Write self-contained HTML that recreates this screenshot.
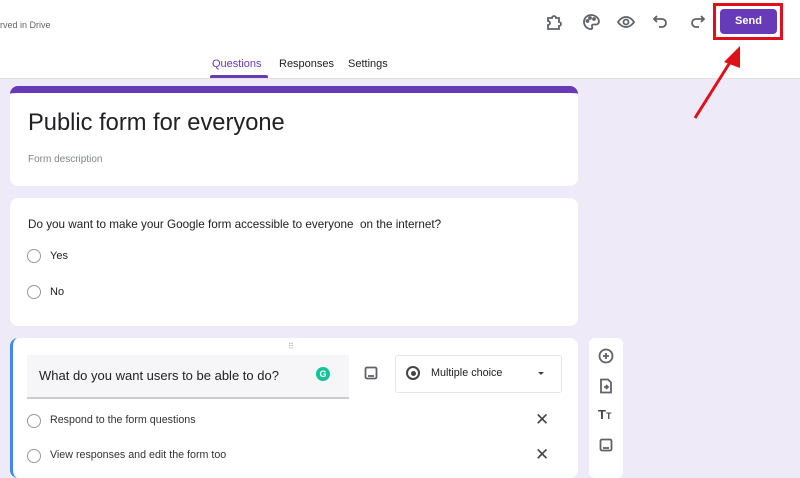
<!DOCTYPE html><html><head><style>
body{margin:0;width:800px;height:470px;overflow:hidden;background:#efeaf7;font-family:"Liberation Sans",sans-serif;position:relative;color:#202124}
.a{position:absolute}
.card{position:absolute;background:#fff;border-radius:8px;left:10px;width:568px}
.rad{position:absolute;width:12px;height:12px;border:1.5px solid #999;border-radius:50%}
.ic{position:absolute;stroke:#5f6368;fill:none;stroke-width:1.8}
</style></head><body>
<div class="a" style="left:0;top:0;width:800px;height:78px;background:#fff;border-bottom:1px solid #e0e0e0"></div>
<div class="a" style="left:0;top:20px;font-size:9px;color:#5f6368">rved in Drive</div>
<svg class="ic" style="left:544px;top:12px" width="20" height="20" viewBox="0 0 20 20"><path d="M4 6h4a2 2 0 1 1 4 0h3v4a2 2 0 1 1 0 4v3H4v-4a2 2 0 1 0 0-4z"/></svg>
<svg class="ic" style="left:581px;top:12px" width="20" height="20" viewBox="0 0 20 20"><path d="M10 3a7 7 0 0 0 0 14c1.5 0 1.5-1.5 1-2.5s0-2 1.5-2H15a3 3 0 0 0 3-3C18 6 14 3 10 3z"/><circle cx="6.5" cy="9" r="1"/><circle cx="9" cy="6" r="1"/><circle cx="13" cy="7" r="1"/></svg>
<svg class="ic" style="left:616px;top:12px" width="20" height="20" viewBox="0 0 20 20"><path d="M2 10s3-5 8-5 8 5 8 5-3 5-8 5-8-5-8-5z"/><circle cx="10" cy="10" r="2.5"/></svg>
<svg class="ic" style="left:652px;top:12px" width="18" height="18" viewBox="0 0 18 18"><path d="M5 4L2 7l3 3M2 7h8a4 4 0 0 1 0 8H7"/></svg>
<svg class="ic" style="left:688px;top:12px" width="18" height="18" viewBox="0 0 18 18"><path d="M13 4l3 3-3 3M16 7H8a4 4 0 0 0 0 8h3"/></svg>
<div class="a" style="left:713px;top:3px;width:70px;height:37px;border:3px solid #e0101a;box-sizing:border-box"></div>
<div class="a" style="left:720px;top:9px;width:57px;height:25px;background:#673ab7;border-radius:4px;color:#fff;font-size:11px;font-weight:bold;text-align:center;line-height:25px">Send</div>
<svg class="a" style="left:690px;top:42px" width="60" height="80"><path d="M5 76L44 14" stroke="#e0101a" stroke-width="3"/><path d="M50 4L34 20L50 26z" fill="#e0101a"/></svg>
<div class="a" style="left:212px;top:58px;font-size:11px;color:#673ab7">Questions</div>
<div class="a" style="left:210px;top:75px;width:58px;height:3px;background:#673ab7;border-radius:2px 2px 0 0"></div>
<div class="a" style="left:279px;top:58px;font-size:11px;color:#202124">Responses</div>
<div class="a" style="left:348px;top:58px;font-size:11px;color:#202124">Settings</div>
<div class="card" style="top:86px;height:100px;border-top:7px solid #673ab7;box-sizing:border-box"></div>
<div class="a" style="left:28px;top:110px;font-size:23.7px">Public form for everyone</div>
<div class="a" style="left:28px;top:154px;font-size:10px;color:#80868b">Form description</div>
<div class="card" style="top:198px;height:128px"></div>
<div class="a" style="left:28px;top:218px;font-size:11.7px">Do you want to make your Google form accessible to everyone &nbsp;on the internet?</div>
<div class="rad" style="left:27px;top:249px"></div><div class="a" style="left:50px;top:250px;font-size:11px">Yes</div>
<div class="rad" style="left:27px;top:285px"></div><div class="a" style="left:50px;top:286px;font-size:11px">No</div>
<div class="card" style="top:338px;height:140px;border-left:3px solid #4285f4;box-sizing:border-box"></div>
<div class="a" style="left:288px;top:342px;font-size:8px;color:#aaa;letter-spacing:1px">⠿</div>
<div class="a" style="left:27px;top:355px;width:322px;height:42px;background:#f6f6f8;border-bottom:2px solid #ccc"></div>
<div class="a" style="left:39px;top:368px;font-size:13px">What do you want users to be able to do?</div>
<div class="a" style="left:316px;top:367px;width:14px;height:14px;border-radius:50%;background:#15c39a;color:#fff;font-size:9px;text-align:center;line-height:14px;font-weight:bold">G</div>
<svg class="ic" style="left:364px;top:366px" width="14" height="14" viewBox="0 0 14 14"><rect x="1.5" y="1.5" width="11" height="11" rx="1.5"/><path d="M4 10h6"/></svg>
<div class="a" style="left:395px;top:355px;width:165px;height:36px;border:1px solid #e6e6e6;border-radius:3px"></div>
<div class="a" style="left:406px;top:366px;width:10px;height:10px;border:2px solid #444;border-radius:50%"><div style="margin:2.5px;width:5px;height:5px;border-radius:50%;background:#444"></div></div>
<div class="a" style="left:431px;top:367px;font-size:10.8px">Multiple choice</div>
<div class="a" style="left:538px;top:372px;border:3px solid transparent;border-top:3px solid #444"></div>
<div class="rad" style="left:27px;top:414px"></div><div class="a" style="left:50px;top:414px;font-size:10.7px;color:#333">Respond to the form questions</div>
<div class="rad" style="left:27px;top:449px"></div><div class="a" style="left:50px;top:449px;font-size:10.7px;color:#333">View responses and edit the form too</div>
<div class="a" style="left:535px;top:410px;font-size:17px;color:#444">✕</div>
<div class="a" style="left:535px;top:445px;font-size:17px;color:#444">✕</div>
<div class="a" style="left:589px;top:338px;width:34px;height:140px;background:#fff;border-radius:6px"></div>
<svg class="ic" style="left:598px;top:348px" width="16" height="16" viewBox="0 0 16 16"><circle cx="8" cy="8" r="6.5"/><path d="M8 5v6M5 8h6"/></svg>
<svg class="ic" style="left:599px;top:378px" width="14" height="16" viewBox="0 0 14 16"><path d="M2 1.5h7l3 3v10H2z"/><path d="M5 9h4M7 7l2 2-2 2"/></svg>
<div class="a" style="left:598px;top:407px;font-size:13px;font-weight:bold;color:#444">T<span style="font-size:9px">T</span></div>
<svg class="ic" style="left:599px;top:438px" width="14" height="14" viewBox="0 0 14 14"><rect x="1.5" y="1.5" width="11" height="11" rx="1.5"/><path d="M4 10h6"/></svg>
</body></html>
